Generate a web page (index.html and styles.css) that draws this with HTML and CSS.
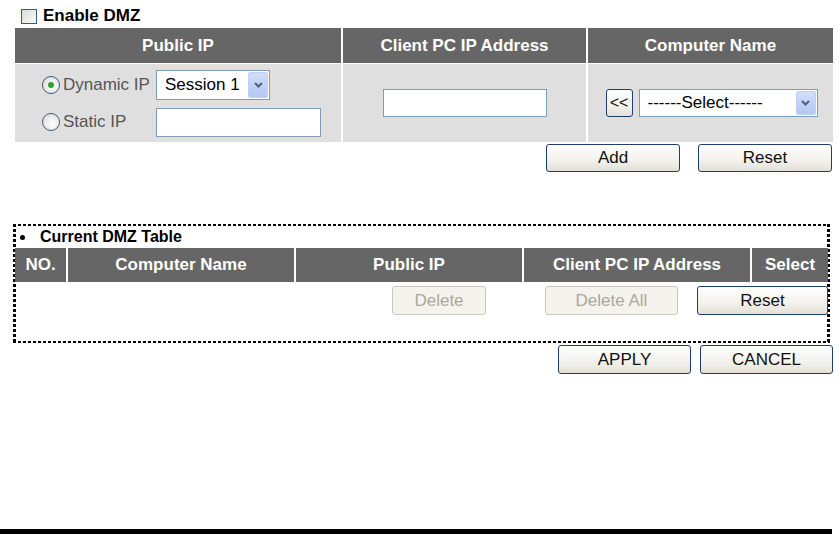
FILE: index.html
```html
<!DOCTYPE html>
<html lang="en">
<head>
  <meta charset="UTF-8">
  <title>DMZ</title>
  <link rel="stylesheet" href="styles.css">
</head>
<body>
  <div class="page">
    <label class="enable"><span class="checkbox"></span>Enable DMZ</label>

    <div class="dmz-grid">
      <div class="th">Public IP</div>
      <div class="th">Client PC IP Address</div>
      <div class="th">Computer Name</div>

      <div class="td ip-cell">
        <div class="ip-choice"><span class="radio checked"></span>Dynamic IP</div>
        <div class="select session">
          <span>Session 1</span>
          <span class="arrow"><svg width="9" height="6" viewBox="0 0 9 6"><path d="M1 1 L4.5 4.5 L8 1" fill="none" stroke="#4d6185" stroke-width="2"/></svg></span>
        </div>
        <div class="ip-choice"><span class="radio"></span>Static IP</div>
        <input class="field static-ip" type="text">
      </div>

      <div class="td centered">
        <input class="field client-ip" type="text">
      </div>

      <div class="td centered computer">
        <button class="btn pick">&lt;&lt;</button>
        <div class="select computer-select">
          <span>------Select------</span>
          <span class="arrow"><svg width="9" height="6" viewBox="0 0 9 6"><path d="M1 1 L4.5 4.5 L8 1" fill="none" stroke="#4d6185" stroke-width="2"/></svg></span>
        </div>
      </div>
    </div>

    <div class="actions add-row">
      <button class="btn wide">Add</button>
      <button class="btn wide">Reset</button>
    </div>

    <div class="current">
      <div class="current-title"><span class="bullet"></span>Current DMZ Table</div>
      <div class="list-head">
        <div class="th">NO.</div>
        <div class="th">Computer Name</div>
        <div class="th">Public IP</div>
        <div class="th">Client PC IP Address</div>
        <div class="th">Select</div>
      </div>
      <div class="actions list-actions">
        <button class="btn delete" disabled>Delete</button>
        <button class="btn delete-all" disabled>Delete All</button>
        <button class="btn reset-list">Reset</button>
      </div>
    </div>

    <div class="actions apply-row">
      <button class="btn wide">APPLY</button>
      <button class="btn wide">CANCEL</button>
    </div>

    <div class="rule"></div>
  </div>
</body>
</html>
```

FILE: styles.css
```css
body {
  margin: 0;
  background: #fff;
  font-family: "Liberation Sans", Arial, sans-serif;
  font-size: 17px;
  color: #000;
}

.page {
  width: 839px;
  padding-top: 6px;
}

.enable {
  display: flex;
  align-items: center;
  gap: 6px;
  height: 20px;
  margin: 0 0 2px 21px;
  font-weight: bold;
}

.checkbox {
  width: 14px;
  height: 13px;
  border: 1px solid #3c5a7c;
  background: linear-gradient(135deg, #dcdcd6, #fafafa);
}

/* top table */
.dmz-grid {
  display: grid;
  grid-template-columns: 326px 243px 245px;
  grid-template-rows: 35px 78px;
  column-gap: 2px;
  row-gap: 1px;
  margin-left: 15px;
  width: 818px;
}

.th {
  background: #666;
  color: #fff;
  font-weight: bold;
  display: flex;
  align-items: center;
  justify-content: center;
}

.td {
  background: #dfdfdf;
}

.centered {
  display: flex;
  align-items: center;
  justify-content: center;
}

.ip-cell {
  display: grid;
  grid-template-columns: 114px auto;
  grid-template-rows: 30px 29px;
  row-gap: 8px;
  align-content: center;
  padding-left: 27px;
}

.ip-choice {
  display: flex;
  align-items: center;
  gap: 3px;
  color: #555;
}

.radio {
  width: 16px;
  height: 16px;
  border: 1px solid #3c5a7c;
  border-radius: 50%;
  background: radial-gradient(circle at 60% 60%, #fff, #d8d8d4);
  display: flex;
  align-items: center;
  justify-content: center;
}

.radio.checked::after {
  content: "";
  width: 6px;
  height: 6px;
  border-radius: 50%;
  background: #2ea42e;
}

.field {
  box-sizing: border-box;
  border: 1px solid #7f9db9;
  background: #fff;
  margin: 0;
  padding: 0;
}

.static-ip {
  width: 165px;
  height: 29px;
}

.client-ip {
  width: 164px;
  height: 28px;
}

.select {
  box-sizing: border-box;
  display: flex;
  align-items: center;
  justify-content: space-between;
  border: 1px solid #7f9db9;
  background: #fff;
  padding: 1px 1px 1px 8px;
}

.select .arrow {
  box-sizing: border-box;
  width: 20px;
  height: 100%;
  border: 1px solid #bdd0f5;
  border-radius: 2px;
  background: linear-gradient(#d2def9, #b4c8f4);
  display: flex;
  align-items: center;
  justify-content: center;
}

.session {
  width: 114px;
  height: 30px;
}

.computer {
  gap: 6px;
  padding-left: 2px;
}

.computer-select {
  width: 179px;
  height: 28px;
}

/* buttons */
.btn {
  box-sizing: border-box;
  height: 28px;
  margin: 0;
  padding: 0;
  border: 1px solid #1f3f6a;
  border-radius: 3px;
  background: linear-gradient(#fff, #f2f1ec 60%, #e2e0d6);
  font-family: "Liberation Sans", Arial, sans-serif;
  font-size: 17px;
  color: #111;
}

.btn:disabled {
  border-color: #cbc8bb;
  background: #f4f3ee;
  color: #aca899;
}

.pick {
  width: 27px;
  font-size: 16px;
}

.wide {
  width: 134px;
}

.actions {
  display: flex;
  justify-content: flex-end;
}

.add-row {
  width: 817px;
  margin: 2px 0 0 15px;
  gap: 18px;
}

/* current table, square-dotted frame */
.current {
  box-sizing: border-box;
  width: 817px;
  height: 119px;
  margin: 52px 0 0 13px;
  padding: 2px 2px 2px 2px;
  background:
    repeating-linear-gradient(90deg, #000 0 3px, transparent 3px 5px) left top / 100% 2px no-repeat,
    repeating-linear-gradient(90deg, #000 0 3px, transparent 3px 5px) left bottom / 100% 2px no-repeat,
    repeating-linear-gradient(180deg, #000 0 3px, transparent 3px 5px) left top / 3px 100% no-repeat,
    repeating-linear-gradient(180deg, #000 0 3px, transparent 3px 5px) right top / 3px 100% no-repeat;
}

.current-title {
  display: flex;
  align-items: center;
  height: 22px;
  font-size: 16px;
  font-weight: bold;
}

.bullet {
  width: 5px;
  height: 5px;
  border-radius: 50%;
  background: #000;
  margin: 0 15px 0 5px;
}

.list-head {
  display: grid;
  grid-template-columns: 51px 226px 226px 226px 1fr;
  column-gap: 2px;
  height: 34px;
}

.list-actions {
  margin-top: 4px;
}

.list-actions .btn {
  height: 29px;
}

.delete {
  width: 94px;
  margin-right: 59px;
}

.delete-all {
  width: 133px;
  margin-right: 19px;
}

.reset-list {
  width: 131px;
}

.apply-row {
  width: 833px;
  margin-top: 2px;
  gap: 9px;
}

.apply-row .btn {
  width: 133px;
  height: 29px;
}

.rule {
  width: 832px;
  height: 5px;
  margin-top: 155px;
  background: #000;
}
```
